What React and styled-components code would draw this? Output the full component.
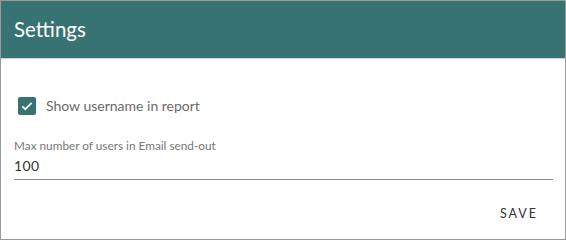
import React, { useState } from 'react';
import styled, { createGlobalStyle } from 'styled-components';

const GlobalStyle = createGlobalStyle`
  html, body {
    margin: 0;
    padding: 0;
    background: #ffffff;
  }
  body {
    font-family: 'Lato', 'Open Sans', sans-serif;
  }
`;

const Card = styled.div`
  box-sizing: border-box;
  width: 566px;
  height: 240px;
  border: 1px solid #9a9a9a;
  display: flex;
  flex-direction: column;
  background: #fff;
`;

const Header = styled.header`
  height: 58px;
  background: #387373;
  border-bottom: 1px solid #cfcfcf;
  display: flex;
  align-items: center;
  padding: 0 14px 2px 13px;
  box-sizing: border-box;
`;

const Title = styled.h2`
  margin: 0;
  font-size: 20.5px;
  font-weight: 400;
  color: #ffffff;
`;

const Body = styled.div`
  flex: 1;
  padding: 37px 12px 0 13px;
`;

const CheckRow = styled.label`
  display: flex;
  align-items: center;
  gap: 10px;
  padding-left: 4px;
  cursor: pointer;
`;

const Box = styled.span`
  width: 18px;
  height: 18px;
  border-radius: 2px;
  background: ${p => (p.checked ? '#387373' : '#fff')};
  border: ${p => (p.checked ? 'none' : '2px solid #777')};
  box-sizing: border-box;
  display: flex;
  align-items: center;
  justify-content: center;
`;

const CheckText = styled.span`
  font-size: 14px;
  line-height: 18px;
  padding-top: 1px;
  color: #6a6a6a;
`;

const Field = styled.div`
  margin-top: 24px;
  display: flex;
  flex-direction: column;
`;

const FieldLabel = styled.span`
  font-size: 11.8px;
  color: #777777;
  line-height: 14px;
`;

const Input = styled.input`
  border: none;
  border-bottom: 1px solid #8a8a8a;
  outline: none;
  font-family: inherit;
  font-size: 14px;
  color: #333;
  padding: 2px 0 5px 0;
  margin-top: 2px;
  background: transparent;
  letter-spacing: 0.4px;
`;

const Footer = styled.div`
  display: flex;
  justify-content: flex-end;
  padding: 0 21px 14px 0;
`;

const TextButton = styled.button`
  border: none;
  background: none;
  font-family: inherit;
  font-size: 12.5px;
  letter-spacing: 2px;
  color: #333;
  padding: 4px 6px;
  cursor: pointer;
`;

export default function App() {
  const [checked, setChecked] = useState(true);
  const [max, setMax] = useState('100');

  return (
    <>
      <GlobalStyle />
      <Card>
        <Header>
          <Title>Settings</Title>
        </Header>
        <Body>
          <CheckRow onClick={() => setChecked(!checked)}>
            <Box checked={checked}>
              {checked && (
                <svg width="14" height="14" viewBox="0 0 24 24">
                  <path d="M4 12.5l5 5L20 6.5" fill="none" stroke="#fff" strokeWidth="3" />
                </svg>
              )}
            </Box>
            <CheckText>Show username in report</CheckText>
          </CheckRow>
          <Field>
            <FieldLabel>Max number of users in Email send-out</FieldLabel>
            <Input value={max} onChange={e => setMax(e.target.value)} />
          </Field>
        </Body>
        <Footer>
          <TextButton>SAVE</TextButton>
        </Footer>
      </Card>
    </>
  );
}
